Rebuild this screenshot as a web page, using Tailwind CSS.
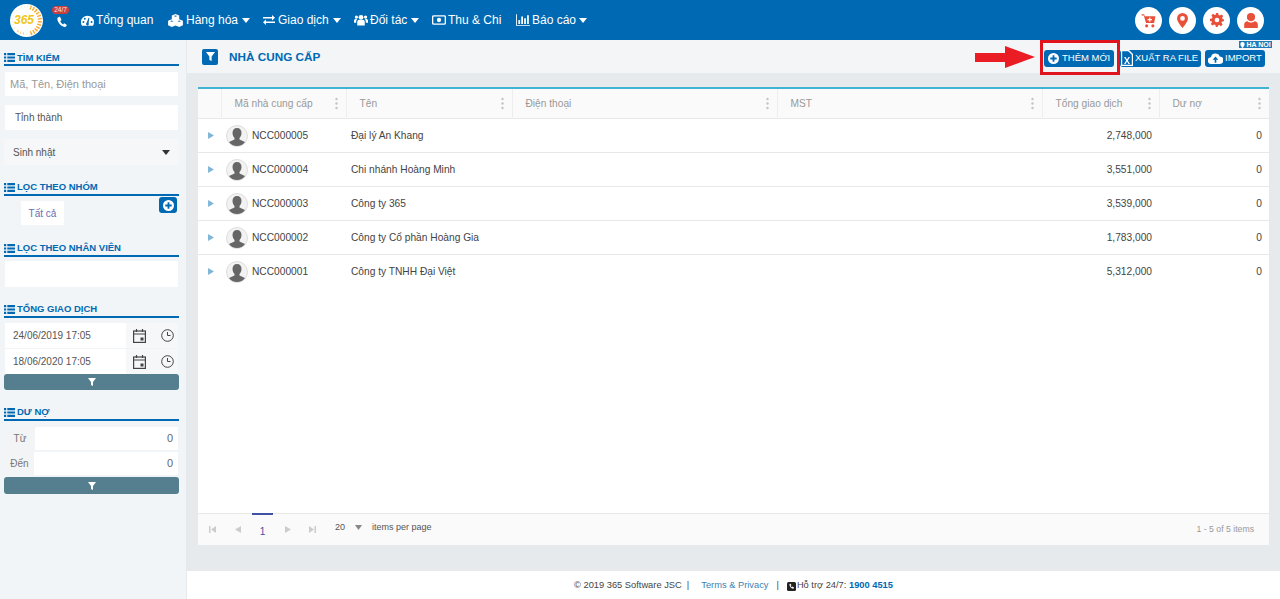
<!DOCTYPE html>
<html lang="vi">
<head>
    <meta charset="UTF-8">
    <meta name="viewport" content="width=device-width, initial-scale=1.0">
    <title>Nhà cung cấp</title>
    <script src="https://cdn.jsdelivr.net/npm/@tailwindcss/browser@4"></script>
</head>
<body class="bg-white h-[599px] overflow-hidden font-['Liberation_Sans',Arial,sans-serif] text-[#444]">
    <!-- top bar -->
    <header class="h-10 bg-[#0069b3] flex items-center relative text-white">
        <div class="w-[33px] h-[33px] ml-[10px] rounded-full bg-white flex items-center justify-center relative">
            <svg class="absolute inset-0" width="33" height="33" viewBox="0 0 33 33"><path d="M20 3.500a13.500 13.500 0 0 1 0 26" fill="none" stroke="#f5a623" stroke-width="4" stroke-dasharray="1.400 1.600"/><path d="M14 29.500a13.500 13.500 0 0 1-7-3" fill="none" stroke="#f8c471" stroke-width="2" stroke-dasharray="1 2"/><circle cx="16.500" cy="16.500" r="14" fill="none" stroke="#fbe3b5" stroke-width="1" stroke-dasharray="1 2"/></svg>
            <span class="relative -ml-[5px] text-[12px] font-bold italic text-[#f0c61a] leading-none">365</span>
        </div>
        <div class="relative w-[18px] ml-[9px]">
            <span class="absolute -top-[7px] left-0 w-[17px] h-[8px] rounded-full bg-[#c9403c] text-[6.500px] leading-[8px] text-center text-[#f8e6e6]">24/7</span>
            <svg width="12" height="12" viewBox="0 0 24 24" fill="white" class="ml-[4px] mt-[3px]"><path d="M6.600 1.500 3 3.600C1.500 9 7 20.500 18.400 22.500l3-3.400c.4-.5.3-1.100-.2-1.500l-4-2.700c-.5-.3-1-.2-1.400.2l-1.600 1.800c-2.600-1.200-4.800-3.800-5.800-6.800l1.900-1.300c.5-.4.6-.9.400-1.400L8.300 2c-.3-.6-1.100-.8-1.700-.5z"/></svg>
        </div>
        <nav class="flex items-center text-[12px] ml-[11px] h-full">
            <a class="flex items-center gap-[2px] w-[87px]"><svg width="13" height="11" viewBox="0 0 24 20" fill="white"><path d="M12 1a12 12 0 0 0-12 12c0 2.500.7 4.700 1.800 6.500h20.400A12 12 0 0 0 24 13 12 12 0 0 0 12 1zm-7.500 13.500a1.800 1.800 0 1 1 0-3.600 1.800 1.800 0 0 1 0 3.600zM7 8.500a1.800 1.800 0 1 1 0-3.600 1.800 1.800 0 0 1 0 3.600zm7.500 8a2.500 2.500 0 1 1-4.200-2L14 5l1.500.5-1.500 9c.4.500.5 1.300.5 2zm5-2a1.800 1.800 0 1 1 0-3.600 1.800 1.800 0 0 1 0 3.600z"/></svg>Tổng quan</a>
            <a class="flex items-center gap-[3px] w-[95px]"><svg width="15" height="13" viewBox="0 0 24 21" fill="white" fill-rule="evenodd"><path d="M12 0l6 2.400v6.200l6 2.400v7L18 21l-6-2.400L6 21l-6-3v-7l6-2.400V2.400zM12 2.300L9.200 3.400 12 4.500l2.800-1.100zM6 10.500L3.200 11.600 6 12.700l2.800-1.100zM18 10.500l-2.800 1.100 2.800 1.100 2.800-1.100z"/></svg>Hàng hóa<svg width="8" height="5" viewBox="0 0 8 5" fill="white" class="ml-[1px]"><path d="M0 0h8L4 5z"/></svg></a>
            <a class="flex items-center gap-[3px] w-[91px]"><svg width="12" height="10" viewBox="0 0 24 20" fill="white"><path d="M24 5.500 18 0v4H0v3h18v4zM0 14.500 6 9v4h18v3H6v4z"/></svg>Giao dịch<svg width="8" height="5" viewBox="0 0 8 5" fill="white" class="ml-[1px]"><path d="M0 0h8L4 5z"/></svg></a>
            <a class="flex items-center gap-[2px] w-[78px]"><svg width="14" height="12" viewBox="0 0 26 20" fill="white"><circle cx="13" cy="5" r="4.500"/><path d="M6 20v-6c0-3 2-4.500 4-4.500h6c2 0 4 1.500 4 4.500v6z"/><circle cx="4.500" cy="4.500" r="3"/><circle cx="21.500" cy="4.500" r="3"/><path d="M0 15v-4c0-2 1.500-3 3-3h3c-1 1-2 3-2 7zM26 15v-4c0-2-1.500-3-3-3h-3c1 1 2 3 2 7z"/></svg>Đối tác<svg width="8" height="5" viewBox="0 0 8 5" fill="white" class="ml-[2px]"><path d="M0 0h8L4 5z"/></svg></a>
            <a class="flex items-center gap-[2px] w-[84px]"><svg width="14" height="10" viewBox="0 0 26 18" fill="none" stroke="white" stroke-width="2.500"><rect x="1.200" y="1.200" width="23.600" height="15.600" rx="2"/><circle cx="13" cy="9" r="4" fill="white" stroke="none"/></svg>Thu &amp; Chi</a>
            <a class="flex items-center gap-[2px]"><svg width="14" height="12" viewBox="0 0 24 20" fill="white"><path d="M0 0h1.500v18.500H24V20H0zM4 10h3v7H4zM9 4h3v13H9zM14 7h3v10h-3zM19 2h3v15h-3z"/></svg>Báo cáo<svg width="8" height="5" viewBox="0 0 8 5" fill="white" class="ml-[1px]"><path d="M0 0h8L4 5z"/></svg></a>
        </nav>
        <div class="ml-auto mr-[16px] flex gap-[7px]">
            <span class="w-[27px] h-[27px] rounded-full bg-white flex items-center justify-center"><svg width="15" height="15" viewBox="0 0 24 24" fill="#e8503a"><path fill-rule="evenodd" d="M1 2h4l1 3h17l-2 11H8L4.500 4H1zM13 7v2.500h-2.500v2H13V14h2v-2.500h2.500v-2H15V7z"/><circle cx="9" cy="20.500" r="2.500"/><circle cx="19" cy="20.500" r="2.500"/></svg></span>
            <span class="w-[27px] h-[27px] rounded-full bg-white flex items-center justify-center"><svg width="11" height="15" viewBox="0 0 16 22" fill="#e8503a"><path fill-rule="evenodd" d="M8 0a8 8 0 0 0-8 8c0 5 8 14 8 14s8-9 8-14a8 8 0 0 0-8-8zm0 4.500a3.500 3.500 0 1 1 0 7 3.500 3.500 0 0 1 0-7z"/></svg></span>
            <span class="w-[27px] h-[27px] rounded-full bg-white flex items-center justify-center"><svg width="14" height="14" viewBox="0 0 24 24" fill="#e8503a"><path fill-rule="evenodd" d="M10 0h4l.7 3.400 2.200.9 2.900-1.900 2.800 2.800-1.900 2.900.9 2.200L24 11v3l-3.400.7-.9 2.200 1.900 2.900-2.800 2.800-2.900-1.900-2.200.9L13 24h-3l-.7-3.400-2.200-.9-2.900 1.900-2.800-2.800 1.900-2.900-.9-2.200L0 14v-4l3.400-.7.9-2.200-1.900-2.900 2.800-2.800 2.900 1.900 2.200-.9zm2 8a4 4 0 1 0 0 8 4 4 0 0 0 0-8z"/></svg></span>
            <span class="w-[27px] h-[27px] rounded-full bg-white flex items-center justify-center"><svg width="14" height="15" viewBox="0 0 20 22" fill="#e8503a"><circle cx="10" cy="6" r="6"/><path d="M0 22v-5c0-3 2-5 5-5 1.500 1.500 3 2 5 2s3.500-.5 5-2c3 0 5 2 5 5v5z"/></svg></span>
        </div>
    </header>

    <div class="flex h-[559px]">
        <!-- left filters -->
        <aside class="w-[187px] shrink-0 bg-[#f2f5f7] pl-1 pr-[7px] border-r border-[#e6eaed] text-[10px]">
            <h3 class="h-[26px] pt-[11px] border-b-[2px] border-[#0069b3] text-[#0069b3] font-bold text-[9.500px] flex items-center gap-[2px] leading-none"><svg width="11" height="9" viewBox="0 0 10 8" fill="#0069b3"><path d="M0 0h2v2H0zM3 0h7v2H3zM0 3h2v2H0zM3 3h7v2H3zM0 6h2v2H0zM3 6h7v2H3z"/></svg>TÌM KIẾM</h3>
            <div class="mt-[6px] mx-[1px] h-[24px] bg-white px-[5px] flex items-center text-[#999] text-[11px]">Mã, Tên, Điện thoại</div>
            <div class="mt-[9px] mx-[1px] h-[25px] bg-white px-[10px] flex items-center text-[#555]">Tỉnh thành</div>
            <div class="mt-[9px] h-[26px] bg-[#f6f7f8] px-[9px] flex items-center justify-between text-[#555]">Sinh nhật<svg width="8" height="5" viewBox="0 0 8 5" fill="#333"><path d="M0 0h8L4 5z"/></svg></div>

            <h3 class="mt-[15px] h-[16px] border-b-[2px] border-[#0069b3] text-[#0069b3] font-bold text-[9.500px] flex items-center gap-[2px] leading-none"><svg width="11" height="9" viewBox="0 0 10 8" fill="#0069b3"><path d="M0 0h2v2H0zM3 0h7v2H3zM0 3h2v2H0zM3 3h7v2H3zM0 6h2v2H0zM3 6h7v2H3z"/></svg>LỌC THEO NHÓM</h3>
            <div class="relative h-[31px]">
                <div class="absolute left-[17px] top-[5px] w-[43px] h-[24px] bg-white flex items-center justify-center text-[#6a6fb5]">Tất cả</div>
                <div class="absolute left-[155px] top-[1px] w-[18px] h-[16px] rounded-[3px] bg-[#0069b3] flex items-center justify-center"><svg width="11" height="11" viewBox="0 0 12 12"><circle cx="6" cy="6" r="6" fill="white"/><path d="M5 2.500h2V5h2.500v2H7v2.500H5V7H2.500V5H5z" fill="#0069b3"/></svg></div>
            </div>

            <h3 class="mt-[14px] h-[16px] border-b-[2px] border-[#0069b3] text-[#0069b3] font-bold text-[9.500px] flex items-center gap-[2px] leading-none"><svg width="11" height="9" viewBox="0 0 10 8" fill="#0069b3"><path d="M0 0h2v2H0zM3 0h7v2H3zM0 3h2v2H0zM3 3h7v2H3zM0 6h2v2H0zM3 6h7v2H3z"/></svg>LỌC THEO NHÂN VIÊN</h3>
            <div class="mt-[4px] mx-[1px] h-[26px] bg-white"></div>

            <h3 class="mt-[15px] h-[16px] border-b-[2px] border-[#0069b3] text-[#0069b3] font-bold text-[9.500px] flex items-center gap-[2px] leading-none"><svg width="11" height="9" viewBox="0 0 10 8" fill="#0069b3"><path d="M0 0h2v2H0zM3 0h7v2H3zM0 3h2v2H0zM3 3h7v2H3zM0 6h2v2H0zM3 6h7v2H3z"/></svg>TỔNG GIAO DỊCH</h3>
            <div class="mt-[5px] mx-[1px] h-[25px] bg-white flex items-center pl-[8px] text-[#555]">
                <span class="flex-1">24/06/2019 17:05</span>
                <div class="h-full w-[52px] bg-[#f6f7f8] flex items-center gap-[15px] pl-[7px]">
                    <svg width="13" height="14" viewBox="0 0 13 14" fill="none" stroke="#444" stroke-width="1.200"><rect x=".6" y="2" width="11.800" height="11.400"/><path d="M.6 5h11.800M3.500 0v3M9.500 0v3"/><rect x="7.500" y="8.500" width="3" height="3" fill="#444" stroke="none"/></svg>
                    <svg width="13" height="13" viewBox="0 0 13 13" fill="none" stroke="#444" stroke-width="1"><circle cx="6.500" cy="6.500" r="5.800"/><path d="M6.500 3v3.500h3"/></svg>
                </div>
            </div>
            <div class="mt-[1px] mx-[1px] h-[25px] bg-white flex items-center pl-[8px] text-[#555]">
                <span class="flex-1">18/06/2020 17:05</span>
                <div class="h-full w-[52px] bg-[#f6f7f8] flex items-center gap-[15px] pl-[7px]">
                    <svg width="13" height="14" viewBox="0 0 13 14" fill="none" stroke="#444" stroke-width="1.200"><rect x=".6" y="2" width="11.800" height="11.400"/><path d="M.6 5h11.800M3.500 0v3M9.500 0v3"/><rect x="7.500" y="8.500" width="3" height="3" fill="#444" stroke="none"/></svg>
                    <svg width="13" height="13" viewBox="0 0 13 13" fill="none" stroke="#444" stroke-width="1"><circle cx="6.500" cy="6.500" r="5.800"/><path d="M6.500 3v3.500h3"/></svg>
                </div>
            </div>
            <div class="h-[16px] rounded-[3px] bg-[#557f8f] flex items-center justify-center"><svg width="8" height="8" viewBox="0 0 8 8" fill="white"><path d="M0 0h8L5 4v4L3 7V4z"/></svg></div>

            <h3 class="mt-[15px] h-[16px] border-b-[2px] border-[#0069b3] text-[#0069b3] font-bold text-[9.500px] flex items-center gap-[2px] leading-none"><svg width="11" height="9" viewBox="0 0 10 8" fill="#0069b3"><path d="M0 0h2v2H0zM3 0h7v2H3zM0 3h2v2H0zM3 3h7v2H3zM0 6h2v2H0zM3 6h7v2H3z"/></svg>DƯ NỢ</h3>
            <div class="mt-[6px] mx-[1px] h-[23px] bg-white flex items-center pr-[5px] text-[#666]">
                <span class="w-[30px] h-full bg-[#f3f4f5] flex items-center justify-center text-[#777]">Từ</span>
                <span class="flex-1 text-right text-[11px]">0</span>
            </div>
            <div class="mt-[2px] mx-[1px] h-[23px] bg-white flex items-center pr-[5px] text-[#666]">
                <span class="w-[29px] h-full bg-[#f3f4f5] flex items-center justify-center text-[#777]">Đến</span>
                <span class="flex-1 text-right text-[11px]">0</span>
            </div>
            <div class="mt-[2px] h-[17px] rounded-[3px] bg-[#557f8f] flex items-center justify-center"><svg width="8" height="8" viewBox="0 0 8 8" fill="white"><path d="M0 0h8L5 4v4L3 7V4z"/></svg></div>
        </aside>

        <main class="flex-1 flex flex-col min-w-0">
            <!-- title bar -->
            <div class="h-[33px] shrink-0 bg-[#f3f5f7] flex items-center pl-[15px] pr-[15px] relative">
                <span class="w-4 h-4 rounded-[2px] bg-[#0069b3] flex items-center justify-center"><svg width="9" height="9" viewBox="0 0 8 8" fill="white"><path d="M0 0h8L5 4v4L3 7V4z"/></svg></span>
                <h1 class="ml-[11px] text-[11.750px] font-bold text-[#0069b3]">NHÀ CUNG CẤP</h1>
                <div class="ml-auto flex items-center mt-[3px] text-white text-[9.500px] whitespace-nowrap">
                    <a class="h-[17px] w-[70px] rounded-[3px] bg-[#0069b3] flex items-center gap-[3px] pl-[4px]"><svg width="11" height="11" viewBox="0 0 12 12"><circle cx="6" cy="6" r="6" fill="white"/><path d="M5 2.500h2V5h2.500v2H7v2.500H5V7H2.500V5H5z" fill="#0069b3"/></svg>THÊM MỚI</a>
                    <a class="ml-[6px] h-[17px] w-[81px] rounded-[3px] bg-[#0069b3] flex items-center gap-[2px] pl-[1px]"><svg width="12" height="16" viewBox="0 0 12 16" fill="white"><path d="M0 0h8l4 4v12H0z"/><path d="M1.200 1.200h6l3.600 3.600v10H1.200z" fill="#0069b3"/><path d="M3 7h1.500L6 9.500 7.500 7H9l-2.200 3.500L9 14H7.500L6 11.500 4.500 14H3l2.200-3.500z"/></svg>XUẤT RA FILE</a>
                    <a class="ml-[4px] h-[17px] w-[60px] rounded-[3px] bg-[#0069b3] flex items-center gap-[2px] pl-[3px]"><svg width="15" height="11" viewBox="0 0 18 13" fill="white"><path d="M4 13a4 4 0 0 1-.5-8A5.500 5.500 0 0 1 14 4a4.500 4.500 0 0 1 0 9z"/><path d="M9 4l3.500 4H10v3.500H8V8H5.500z" fill="#0069b3"/></svg>IMPORT</a>
                </div>
                <span class="absolute right-[8px] top-[1px] h-[7px] w-[33px] bg-[#1f7ab8] text-white text-[7px] leading-[7px] font-bold flex items-center justify-center gap-[1px]"><svg width="5" height="6" viewBox="0 0 16 22" fill="white"><path d="M8 0a8 8 0 0 0-8 8c0 5 8 14 8 14s8-9 8-14a8 8 0 0 0-8-8z"/></svg>HA NOI</span>
            </div>

            <!-- grid -->
            <div class="flex-1 bg-[#e6eaed] pt-[14px] pl-[11px] pr-[11px] pb-[26px] min-h-0">
                <div class="h-[458px] bg-white border-t-[2px] border-[#3fb3d1] flex flex-col">
                    <table class="w-full table-fixed text-[10.200px] border-collapse">
                        <colgroup>
                            <col class="w-[23px]"><col class="w-[125px]"><col class="w-[166px]"><col class="w-[265px]"><col class="w-[265px]"><col class="w-[117px]"><col>
                        </colgroup>
                        <thead>
                            <tr class="h-[29px] bg-[#fafafa] border-b border-[#e8e8e8] text-[#999] text-left">
                                <th class="font-normal border-r border-[#eee]"></th>
                                <th class="font-normal border-r border-[#eee] pl-[13px]"><div class="flex items-center justify-between pr-[8px]">Mã nhà cung cấp<svg width="3" height="13" viewBox="0 0 3 13" fill="#c4c4c4"><circle cx="1.500" cy="2" r="1.200"/><circle cx="1.500" cy="6.500" r="1.200"/><circle cx="1.500" cy="11" r="1.200"/></svg></div></th>
                                <th class="font-normal border-r border-[#eee] pl-[13px]"><div class="flex items-center justify-between pr-[8px]">Tên<svg width="3" height="13" viewBox="0 0 3 13" fill="#c4c4c4"><circle cx="1.500" cy="2" r="1.200"/><circle cx="1.500" cy="6.500" r="1.200"/><circle cx="1.500" cy="11" r="1.200"/></svg></div></th>
                                <th class="font-normal border-r border-[#eee] pl-[13px]"><div class="flex items-center justify-between pr-[8px]">Điện thoại<svg width="3" height="13" viewBox="0 0 3 13" fill="#c4c4c4"><circle cx="1.500" cy="2" r="1.200"/><circle cx="1.500" cy="6.500" r="1.200"/><circle cx="1.500" cy="11" r="1.200"/></svg></div></th>
                                <th class="font-normal border-r border-[#eee] pl-[13px]"><div class="flex items-center justify-between pr-[8px]">MST<svg width="3" height="13" viewBox="0 0 3 13" fill="#c4c4c4"><circle cx="1.500" cy="2" r="1.200"/><circle cx="1.500" cy="6.500" r="1.200"/><circle cx="1.500" cy="11" r="1.200"/></svg></div></th>
                                <th class="font-normal border-r border-[#eee] pl-[13px]"><div class="flex items-center justify-between pr-[8px]">Tổng giao dịch<svg width="3" height="13" viewBox="0 0 3 13" fill="#c4c4c4"><circle cx="1.500" cy="2" r="1.200"/><circle cx="1.500" cy="6.500" r="1.200"/><circle cx="1.500" cy="11" r="1.200"/></svg></div></th>
                                <th class="font-normal pl-[13px]"><div class="flex items-center justify-between pr-[8px]">Dư nợ<svg width="3" height="13" viewBox="0 0 3 13" fill="#c4c4c4"><circle cx="1.500" cy="2" r="1.200"/><circle cx="1.500" cy="6.500" r="1.200"/><circle cx="1.500" cy="11" r="1.200"/></svg></div></th>
                            </tr>
                        </thead>
                        <tbody class="text-[#444] [&_td]:pt-[1px]">
                            <tr class="h-[34px] border-b border-[#e8e8e8]">
                                <td class="pl-[10px]"><svg width="6" height="7" viewBox="0 0 5 6" fill="#7fb6d8"><path d="M0 0l5 3-5 3z"/></svg></td>
                                <td><div class="flex items-center gap-[4px] pl-[5px]"><svg width="22" height="22" viewBox="0 0 22 22" class="shrink-0"><circle cx="11" cy="11" r="10.500" fill="#f2f2f2" stroke="#ddd"/><path d="M11 3c3 0 4.500 2 4.500 5 0 2-1 4-2 5v1.500l5.500 2.500c-1.800 2.500-4.500 4-8 4s-6.200-1.500-8-4l5.500-2.500V13c-1-1-2-3-2-5 0-3 1.500-5 4.500-5z" fill="#666"/></svg>NCC000005</div></td>
                                <td class="pl-[5px]">Đại lý An Khang</td><td></td><td></td>
                                <td class="text-right pr-[7px]">2,748,000</td><td class="text-right pr-[7px]">0</td>
                            </tr>
                            <tr class="h-[34px] border-b border-[#e8e8e8]">
                                <td class="pl-[10px]"><svg width="6" height="7" viewBox="0 0 5 6" fill="#7fb6d8"><path d="M0 0l5 3-5 3z"/></svg></td>
                                <td><div class="flex items-center gap-[4px] pl-[5px]"><svg width="22" height="22" viewBox="0 0 22 22" class="shrink-0"><circle cx="11" cy="11" r="10.500" fill="#f2f2f2" stroke="#ddd"/><path d="M11 3c3 0 4.500 2 4.500 5 0 2-1 4-2 5v1.500l5.500 2.500c-1.800 2.500-4.500 4-8 4s-6.200-1.500-8-4l5.500-2.500V13c-1-1-2-3-2-5 0-3 1.500-5 4.500-5z" fill="#666"/></svg>NCC000004</div></td>
                                <td class="pl-[5px]">Chi nhánh Hoàng Minh</td><td></td><td></td>
                                <td class="text-right pr-[7px]">3,551,000</td><td class="text-right pr-[7px]">0</td>
                            </tr>
                            <tr class="h-[34px] border-b border-[#e8e8e8]">
                                <td class="pl-[10px]"><svg width="6" height="7" viewBox="0 0 5 6" fill="#7fb6d8"><path d="M0 0l5 3-5 3z"/></svg></td>
                                <td><div class="flex items-center gap-[4px] pl-[5px]"><svg width="22" height="22" viewBox="0 0 22 22" class="shrink-0"><circle cx="11" cy="11" r="10.500" fill="#f2f2f2" stroke="#ddd"/><path d="M11 3c3 0 4.500 2 4.500 5 0 2-1 4-2 5v1.500l5.500 2.500c-1.800 2.500-4.500 4-8 4s-6.200-1.500-8-4l5.500-2.500V13c-1-1-2-3-2-5 0-3 1.500-5 4.500-5z" fill="#666"/></svg>NCC000003</div></td>
                                <td class="pl-[5px]">Công ty 365</td><td></td><td></td>
                                <td class="text-right pr-[7px]">3,539,000</td><td class="text-right pr-[7px]">0</td>
                            </tr>
                            <tr class="h-[34px] border-b border-[#e8e8e8]">
                                <td class="pl-[10px]"><svg width="6" height="7" viewBox="0 0 5 6" fill="#7fb6d8"><path d="M0 0l5 3-5 3z"/></svg></td>
                                <td><div class="flex items-center gap-[4px] pl-[5px]"><svg width="22" height="22" viewBox="0 0 22 22" class="shrink-0"><circle cx="11" cy="11" r="10.500" fill="#f2f2f2" stroke="#ddd"/><path d="M11 3c3 0 4.500 2 4.500 5 0 2-1 4-2 5v1.500l5.500 2.500c-1.800 2.500-4.500 4-8 4s-6.200-1.500-8-4l5.500-2.500V13c-1-1-2-3-2-5 0-3 1.500-5 4.500-5z" fill="#666"/></svg>NCC000002</div></td>
                                <td class="pl-[5px]">Công ty Cổ phần Hoàng Gia</td><td></td><td></td>
                                <td class="text-right pr-[7px]">1,783,000</td><td class="text-right pr-[7px]">0</td>
                            </tr>
                            <tr class="h-[34px] border-b border-transparent">
                                <td class="pl-[10px]"><svg width="6" height="7" viewBox="0 0 5 6" fill="#7fb6d8"><path d="M0 0l5 3-5 3z"/></svg></td>
                                <td><div class="flex items-center gap-[4px] pl-[5px]"><svg width="22" height="22" viewBox="0 0 22 22" class="shrink-0"><circle cx="11" cy="11" r="10.500" fill="#f2f2f2" stroke="#ddd"/><path d="M11 3c3 0 4.500 2 4.500 5 0 2-1 4-2 5v1.500l5.500 2.500c-1.800 2.500-4.500 4-8 4s-6.200-1.500-8-4l5.500-2.500V13c-1-1-2-3-2-5 0-3 1.500-5 4.500-5z" fill="#666"/></svg>NCC000001</div></td>
                                <td class="pl-[5px]">Công ty TNHH Đại Việt</td><td></td><td></td>
                                <td class="text-right pr-[7px]">5,312,000</td><td class="text-right pr-[7px]">0</td>
                            </tr>
                        </tbody>
                    </table>
                    <!-- pager -->
                    <div class="mt-auto h-[32px] bg-[#fafafa] border-t border-[#e8e8e8] flex items-center text-[9px] text-[#555] relative">
                        <div class="flex items-center ml-[11px] gap-[19px]">
                            <svg width="7" height="7" viewBox="0 0 7 7" fill="#ccc"><path d="M0 0h1.500v7H0zM7 0v7L2 3.500z"/></svg>
                            <svg width="6" height="7" viewBox="0 0 6 7" fill="#ccc"><path d="M6 0v7L0 3.500z"/></svg>
                        </div>
                        <span class="absolute left-[54px] -top-px w-[21px] h-[32px] border-t-[2px] border-[#3f51a3] flex items-center justify-center text-[#3f51a3] pt-[2px] text-[10px]">1</span>
                        <div class="flex items-center ml-[44px] gap-[18px]">
                            <svg width="6" height="7" viewBox="0 0 6 7" fill="#ccc"><path d="M0 0v7l6-3.500z"/></svg>
                            <svg width="7" height="7" viewBox="0 0 7 7" fill="#ccc"><path d="M5.500 0H7v7H5.500zM0 0v7l5-3.500z"/></svg>
                        </div>
                        <span class="ml-[19px] -mt-[4px]">20</span>
                        <svg width="7" height="5" viewBox="0 0 7 5" fill="#888" class="ml-[10px] -mt-[4px]"><path d="M0 0h7L3.500 5z"/></svg>
                        <span class="ml-[10px] -mt-[4px]">items per page</span>
                        <span class="ml-auto mr-[15px] text-[#999] text-[8.700px]">1 - 5 of 5 items</span>
                    </div>
                </div>
            </div>

            <footer class="h-[28px] shrink-0 bg-white flex items-center justify-center pt-[2px] text-[9.300px] text-[#444]">
                <span>© 2019 365 Software JSC&nbsp; |</span>
                <a class="ml-3 text-[#3d7fb3]">Terms &amp; Privacy</a>
                <span class="ml-2">|</span>
                <svg width="9" height="9" viewBox="0 0 9 9" class="ml-2 mr-[1px]"><rect width="9" height="9" rx="1.500" fill="#222"/><path d="M2.500 2l1.200-.3.700 1.500-.7.600c.2.700.6 1.200 1.300 1.500l.6-.7 1.400.8-.4 1.200C4.500 7 2.300 4.500 2.500 2z" fill="white"/></svg>
                <span>Hỗ trợ 24/7:&nbsp;</span><b class="text-[#0069b3]">1900 4515</b>
            </footer>
        </main>
    </div>

    <!-- annotation over the screenshot -->
    <div class="absolute left-[1040px] top-[40px] w-[80px] h-[35px] border-[3px] border-[#e0141c]"></div>
    <svg class="absolute left-[975px] top-[46px]" width="60" height="22" viewBox="0 0 60 22" fill="#ea1c24"><path d="M0 7h30V0l30 11-30 11v-6H0z"/></svg>
</body>
</html>
